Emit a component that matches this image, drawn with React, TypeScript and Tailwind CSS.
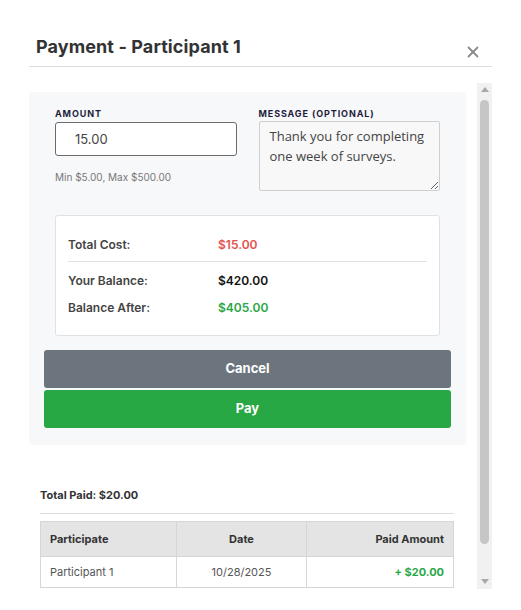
import { X } from "lucide-react";

const payments = [
  { name: "Participant 1", date: "10/28/2025", amount: "+ $20.00" },
];

export default function App() {
  return (
    <div className="min-h-screen bg-white px-[29px] font-['Inter',sans-serif] text-[#333]">
      {/* header */}
      <div className="flex items-end justify-between border-b border-[#dcdcdc] pl-[7px] pr-[10px] pt-[36px] pb-[8px]">
        <h2 className="text-[18px] font-bold leading-[22px] tracking-[0.1px] text-[#333]">
          Payment - Participant 1
        </h2>
        <X className="mb-[-3px] h-[18px] w-[18px] text-[#8a8a8a]" strokeWidth={2.4} />
      </div>

      {/* body with scroll rail */}
      <div className="mt-[16px] flex h-[506px]">
        <div className="min-w-0 flex-1 overflow-hidden">
          <div className="mr-[11px] mt-[9px] rounded-[4px] bg-[#f7f8fa] px-[15px] pt-[15px] pb-[16px] shadow-[0_1px_2px_rgba(0,0,0,0.04)]">
            <div className="px-[11px]">
              <div className="grid grid-cols-2 gap-[22px]">
                <div>
                  <label className="block text-[9px] font-bold uppercase tracking-[0.9px] text-[#1e1e3c]">
                    Amount
                  </label>
                  <input
                    defaultValue="15.00"
                    className="mt-[1px] h-[34px] w-full rounded-[3px] border border-[#6b6b6b] bg-white px-[19px] text-[13px] text-[#444] outline-none"
                  />
                  <p className="mt-[14px] text-[10px] text-[#777]">Min $5.00, Max $500.00</p>
                </div>
                <div>
                  <label className="block text-[9px] font-bold uppercase tracking-[0.9px] text-[#1e1e3c]">
                    Message (optional)
                  </label>
                  <textarea
                    defaultValue="Thank you for completing one week of surveys."
                    className="mt-0 block h-[70px] w-full resize-y rounded-[2px] border border-[#cfcfcf] bg-[#f8f8f8] px-[10px] py-[4px] font-['Open_Sans',sans-serif] text-[13px] leading-[20px] text-[#444] outline-none"
                  />
                </div>
              </div>

              <div className="mt-[24px] rounded-[3px] border border-[#dfe1e5] bg-white px-[12px] pt-[19px] pb-[17px] text-[12px] font-semibold">
                <div className="flex pb-[6px] leading-[20px]">
                  <span className="w-[150px] text-[#444]">Total Cost:</span>
                  <span className="text-[#e4524f]">$15.00</span>
                </div>
                <div className="border-t border-[#dfe1e5]" />
                <div className="flex pt-[9px] leading-[20px]">
                  <span className="w-[150px] text-[#444]">Your Balance:</span>
                  <span className="text-[#111]">$420.00</span>
                </div>
                <div className="flex pt-[7px] leading-[20px]">
                  <span className="w-[150px] text-[#444]">Balance After:</span>
                  <span className="text-[#28a745]">$405.00</span>
                </div>
              </div>
            </div>

            <div className="mt-[14px] flex flex-col gap-[2px]">
              <button className="h-[38px] rounded-[3px] bg-[#6c757d] text-[13px] font-bold text-white">
                Cancel
              </button>
              <button className="h-[38px] rounded-[3px] bg-[#28a745] text-[13px] font-bold text-white">
                Pay
              </button>
            </div>
          </div>

          <div className="mr-[23px] ml-[11px] mt-[43px]">
            <p className="pb-[10px] text-[11px] font-bold text-[#333]">Total Paid: $20.00</p>
            <div className="border-t border-[#dcdcdc]" />
            <table className="mt-[7px] w-full border-collapse text-[11px]">
              <thead>
                <tr className="h-[35px] bg-[#e4e4e4]">
                  <th className="w-[136px] border border-[#d6d6d6] px-[9px] text-left font-bold text-[#333]">
                    Participate
                  </th>
                  <th className="w-[130px] border border-[#d6d6d6] px-[9px] text-center font-bold text-[#333]">
                    Date
                  </th>
                  <th className="border border-[#d6d6d6] px-[9px] text-right font-bold text-[#333]">
                    Paid Amount
                  </th>
                </tr>
              </thead>
              <tbody>
                {payments.map((p) => (
                  <tr key={p.name} className="h-[31px] bg-white">
                    <td className="border border-[#d6d6d6] px-[9px] text-[#555]">{p.name}</td>
                    <td className="border border-[#d6d6d6] px-[9px] text-center text-[#555]">{p.date}</td>
                    <td className="border border-[#d6d6d6] px-[9px] text-right font-bold text-[#28a745]">
                      {p.amount}
                    </td>
                  </tr>
                ))}
              </tbody>
            </table>
          </div>
        </div>

        {/* scrollbar */}
        <div className="flex w-[15px] flex-col items-center bg-[#f1f1f1] pt-[4px] pb-[5px]">
          <div className="h-0 w-0 border-x-[4px] border-b-[5px] border-x-transparent border-b-[#a8a8a8]" />
          <div className="mt-[8px] h-[444px] w-[9px] rounded-full bg-[#c6c6c6]" />
          <div className="mt-auto h-0 w-0 border-x-[4px] border-t-[5px] border-x-transparent border-t-[#a8a8a8]" />
        </div>
      </div>
    </div>
  );
}
